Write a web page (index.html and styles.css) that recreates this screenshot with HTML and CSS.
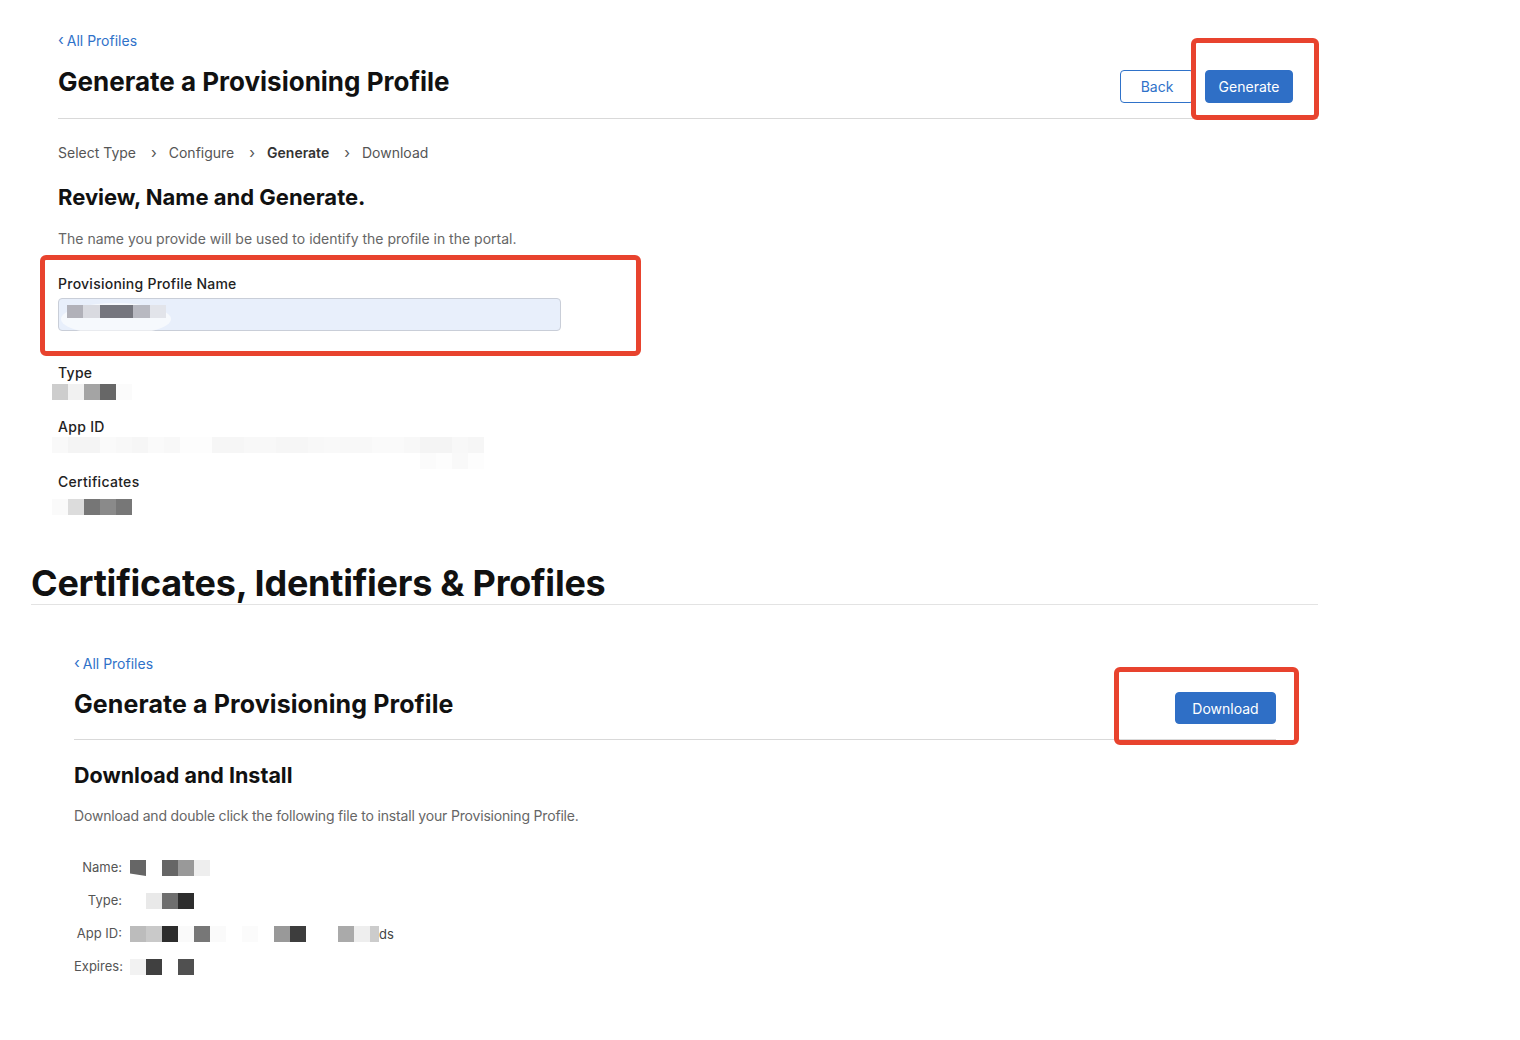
FILE: index.html
```html
<!DOCTYPE html>
<html lang="en">
<head>
<meta charset="utf-8">
<title>Generate a Provisioning Profile</title>
<link rel="stylesheet" href="styles.css">
</head>
<body>
<section class="shot shot-one">
  <header class="page-head">
    <div class="head-left">
      <a class="back-link" href="#"><span class="chev">‹</span> All Profiles</a>
      <h1 class="page-title">Generate a Provisioning Profile</h1>
    </div>
    <div class="actions">
      <button class="btn btn-outline btn-back">Back</button>
      <span class="annot annot-generate"><button class="btn btn-primary btn-generate">Generate</button></span>
    </div>
  </header>

  <nav class="crumbs">
    <span>Select Type</span><span class="sep">›</span>
    <span>Configure</span><span class="sep">›</span>
    <span class="current">Generate</span><span class="sep">›</span>
    <span>Download</span>
  </nav>

  <h2 class="section-title">Review, Name and Generate.</h2>
  <p class="desc">The name you provide will be used to identify the profile in the portal.</p>

  <div class="annot annot-field field">
    <label class="field-label">Provisioning Profile Name</label>
    <div class="input">
      <span class="smear"></span>
      <span class="mosaic mosaic-input"><i class="i1"></i><i class="i2"></i><i class="i3 wide"></i><i class="i4"></i><i class="i5"></i></span>
    </div>
  </div>

  <dl class="details">
    <dt class="detail-label lab-type">Type</dt>
    <dd class="mosaic mosaic-block shift"><i class="g-cd"></i><i class="g-f1"></i><i class="g-a4"></i><i class="g-67"></i><i class="g-fb"></i></dd>
    <dt class="detail-label lab-app">App ID</dt>
    <dd class="faint-rows shift">
      <span class="mosaic"><i class="g-f9"></i><i class="g-f6"></i><i class="g-f6"></i><i class="g-fa"></i><i class="g-f8"></i><i class="g-f7"></i><i class="g-fa"></i><i class="g-f8"></i><i class="g-fd"></i><i class="g-fd"></i><i class="g-f7"></i><i class="g-f7"></i><i class="g-f8"></i><i class="g-f8"></i><i class="g-f7"></i><i class="g-f7"></i><i class="g-f8"></i><i class="g-f9"></i><i class="g-f8"></i><i class="g-f8"></i><i class="g-fa"></i><i class="g-fa"></i><i class="g-f8"></i><i class="g-f6"></i><i class="g-f6"></i><i class="g-f8"></i><i class="g-f7"></i></span>
      <span class="mosaic second-row"><i class="g-fb"></i><i class="g-fd"></i><i class="g-f9"></i><i class="g-fd"></i></span>
    </dd>
    <dt class="detail-label lab-cert">Certificates</dt>
    <dd class="mosaic mosaic-block shift"><i class="g-fa"></i><i class="g-dc"></i><i class="g-76"></i><i class="g-8a"></i><i class="g-77"></i></dd>
  </dl>
</section>

<section class="shot shot-two">
  <h1 class="brand-title">Certificates, Identifiers &amp; Profiles</h1>
  <div class="inner">
    <header class="page-head head-two">
      <div class="head-left">
        <a class="back-link" href="#"><span class="chev">‹</span> All Profiles</a>
        <h1 class="page-title title-two">Generate a Provisioning Profile</h1>
      </div>
      <div class="actions">
        <span class="annot annot-download"><button class="btn btn-primary btn-download">Download</button></span>
      </div>
    </header>

    <h2 class="section-title title-install">Download and Install</h2>
    <p class="desc">Download and double click the following file to install your Provisioning Profile.</p>

    <dl class="summary">
      <dt>Name:</dt>
      <dd class="mosaic"><i class="g-66 cut"></i><i class="g-none"></i><i class="g-66"></i><i class="g-99"></i><i class="g-ee"></i></dd>
      <dt>Type:</dt>
      <dd class="mosaic"><i class="g-none"></i><i class="g-e9"></i><i class="g-6e"></i><i class="g-2d"></i></dd>
      <dt>App ID:</dt>
      <dd class="mosaic"><i class="g-bc"></i><i class="g-c9"></i><i class="g-2d"></i><i class="g-fa"></i><i class="g-77"></i><i class="g-fa"></i><i class="g-none"></i><i class="g-fb"></i><i class="g-none"></i><i class="g-99"></i><i class="g-3d"></i><i class="g-none"></i><i class="g-none"></i><i class="g-aa"></i><i class="g-ee"></i><i class="g-cc half"></i><span class="tail">ds</span></dd>
      <dt>Expires:</dt>
      <dd class="mosaic"><i class="g-f2"></i><i class="g-40"></i><i class="g-none"></i><i class="g-50"></i></dd>
    </dl>
  </div>
</section>
</body>
</html>
```

FILE: styles.css
```css
* { box-sizing: border-box; }

body {
  margin: 0;
  background: #ffffff;
  font-family: Inter, "Noto Sans", "Liberation Sans", sans-serif;
  color: #1d1d1f;
  -webkit-font-smoothing: antialiased;
}

h1, h2, p, dl, dd { margin: 0; }

.shot-one {
  width: 1260px;
  margin-left: 58px;
  padding-top: 30px;
}

.page-head {
  display: flex;
  justify-content: space-between;
  align-items: flex-end;
  border-bottom: 1px solid #d9d9d9;
  padding-bottom: 15px;
}

.back-link {
  display: flex;
  align-items: center;
  gap: 3px;
  height: 20px;
  color: #2f72c9;
  font-size: 14px;
  text-decoration: none;
}

.chev { font-size: 15px; line-height: 1; position: relative; top: -1px; }

.page-title {
  margin-top: 16px;
  margin-bottom: 5px;
  font-size: 26px;
  line-height: 32px;
  font-weight: 700;
  letter-spacing: 0;
  color: #111;
}

.actions {
  display: flex;
  gap: 11px;
  margin-right: 25px;
}

.btn {
  height: 33px;
  border-radius: 4px;
  font-family: inherit;
  font-size: 14px;
  padding: 0;
  cursor: pointer;
}

.btn-outline {
  background: #fff;
  border: 1px solid #2f72c9;
  color: #2f72c9;
}

.btn-back { width: 74px; }

.btn-primary {
  background: #2f6fc6;
  border: 1px solid #2f6fc6;
  color: #fff;
}

.btn-generate { width: 88px; }

.annot { position: relative; display: inline-block; }

.annot::after {
  content: "";
  position: absolute;
  border: 5px solid #e8432e;
  border-radius: 6px;
  pointer-events: none;
}

.annot-generate::after { top: -32px; left: -14px; right: -26px; bottom: -17px; }

.crumbs {
  margin-top: 23px;
  display: flex;
  align-items: center;
  height: 20px;
  font-size: 14px;
  color: #555;
}

.crumbs .sep { margin: 0 12px 0 15px; color: #555; font-size: 15px; }
.crumbs .current { font-weight: 600; color: #333; }

.section-title {
  margin-top: 22px;
  font-size: 22px;
  line-height: 26px;
  font-weight: 700;
  letter-spacing: 0;
  color: #111;
}

.desc {
  margin-top: 19px;
  font-size: 14px;
  line-height: 20px;
  color: #666;
}

.field {
  display: block;
  width: 503px;
  margin-top: 25px;
}

.annot-field::after { top: -19px; left: -18px; right: -80px; bottom: -25px; }

.field-label {
  display: block;
  font-size: 14px;
  line-height: 20px;
  font-weight: 500;
  letter-spacing: 0.25px;
  color: #222;
}

.input {
  position: relative;
  margin-top: 4px;
  height: 33px;
  background: #e8effb;
  border: 1px solid #c9ced8;
  border-radius: 4px;
  padding: 6px 0 0 8px;
}

.smear {
  position: absolute;
  left: 2px;
  top: 4px;
  width: 110px;
  height: 32px;
  border-radius: 50%;
  background: rgba(255, 255, 255, 0.6);
}

.mosaic { display: flex; align-items: center; }
.mosaic i { display: block; width: 16px; height: 16px; flex: none; }
.mosaic i.wide { width: 33px; }
.mosaic i.half { width: 9px; }

.mosaic-input { position: relative; }
.mosaic-input i { height: 13px; }
.i1 { background: #b1b1b9; }
.i2 { background: #d9dae0; width: 17px !important; }
.i3 { background: #75767e; }
.i4 { background: #b8b9c1; width: 17px !important; }
.i5 { background: #e2e4ea; }

.details { margin-top: 32px; }

.detail-label {
  font-size: 14px;
  line-height: 20px;
  font-weight: 500;
  letter-spacing: 0.3px;
  color: #222;
}

.shift { margin-left: -6px; }

.lab-type + .mosaic-block { margin-top: 1px; }
.lab-app { margin-top: 17px; }
.faint-rows { height: 35px; }
.faint-rows .second-row { margin-left: 368px; }
.lab-cert + .mosaic-block { margin-top: 7px; }

.g-none { background: transparent; }
.g-cd { background: #cdcdcd; }
.g-f1 { background: #f1f1f1; }
.g-a4 { background: #a4a4a4; }
.g-67 { background: #676767; }
.g-fb { background: #fbfbfb; }
.g-fa { background: #fafafa; }
.g-f9 { background: #f9f9f9; }
.g-f8 { background: #f8f8f8; }
.g-f7 { background: #f6f6f6; }
.g-f6 { background: #f4f4f4; }
.g-fd { background: #fdfdfd; }
.g-dc { background: #dcdcdc; }
.g-76 { background: #767676; }
.g-8a { background: #8a8a8a; }
.g-77 { background: #777777; }
.g-66 { background: #666666; }
.g-99 { background: #999999; }
.g-ee { background: #eeeeee; }
.g-e9 { background: #e9e9e9; }
.g-6e { background: #6e6e6e; }
.g-2d { background: #2d2d2d; }
.g-bc { background: #bcbcbc; }
.g-c9 { background: #c9c9c9; }
.g-3d { background: #3d3d3d; }
.g-aa { background: #aaaaaa; }
.g-cc { background: #cccccc; }
.g-f2 { background: #f2f2f2; }
.g-40 { background: #404040; }
.g-50 { background: #505050; }
.cut { clip-path: polygon(0 0, 100% 0, 100% 100%, 0 85%); }

/* second screenshot */
.shot-two { margin-top: 47px; }

.brand-title {
  width: 1287px;
  margin-left: 31px;
  font-size: 36px;
  line-height: 42px;
  font-weight: 700;
  letter-spacing: -0.25px;
  color: #111;
  border-bottom: 1px solid #e3e3e3;
}

.inner {
  width: 1202px;
  margin-left: 74px;
  padding-top: 48px;
}

.head-two { padding-bottom: 15px; }
.title-two { margin-top: 15px; margin-bottom: 4px; font-size: 25px; letter-spacing: 0.1px; }
.head-two .actions { margin-right: 0; }

.btn-download { width: 101px; height: 32px; }
.annot-download::after { top: -25px; left: -61px; right: -23px; bottom: -21px; }

.title-install { margin-top: 22px; font-size: 21.5px; }
.inner .desc { margin-top: 18px; letter-spacing: -0.18px; }

.summary {
  margin-top: 24px;
  display: grid;
  grid-template-columns: 48px 1fr;
  grid-auto-rows: 33px;
  column-gap: 8px;
  align-items: center;
  font-size: 13px;
  color: #555;
}

.summary dt { text-align: right; }
.summary dd { margin-top: 3px; }
.summary .tail { font-size: 13px; color: #444; }
```
